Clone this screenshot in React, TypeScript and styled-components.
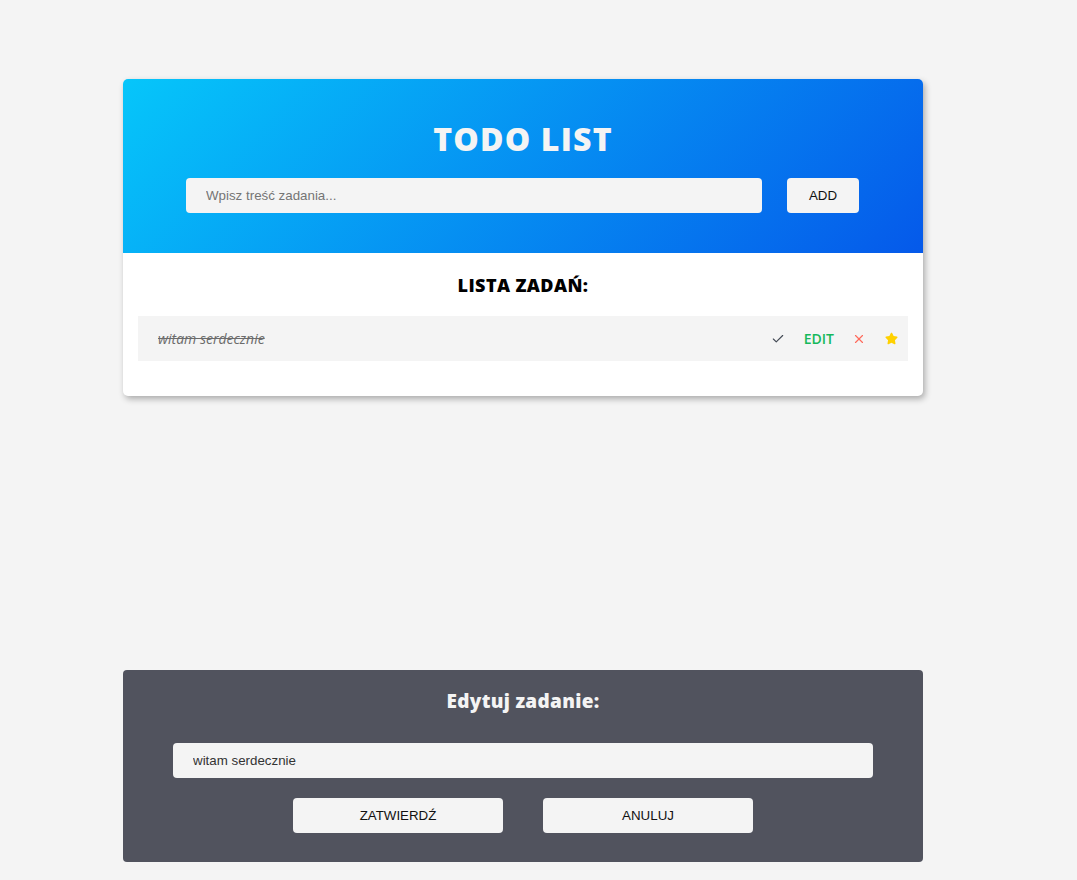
import React from "react";
import styled, { createGlobalStyle } from "styled-components";
import { Check, X } from "lucide-react";
import { FaStar } from "react-icons/fa";

const Global = createGlobalStyle`
  html, body { margin: 0; padding: 0; background: #f4f4f4; }
  body { font-family: "Liberation Sans", Arial, sans-serif; }
  * { box-sizing: border-box; }
`;

const Page = styled.div`
  padding: 79px 0 0 123px;
  display: flex;
  flex-direction: column;
`;

const Card = styled.div`
  width: 800px;
  background: #fff;
  border-radius: 5px;
  box-shadow: 2px 3px 6px rgba(0, 0, 0, 0.3);
  overflow: hidden;
`;

const Header = styled.header`
  height: 174px;
  background: linear-gradient(135deg, #06c6fa 0%, #0559ea 100%);
  display: flex;
  flex-direction: column;
  align-items: center;
  padding-top: 40px;
`;

const Title = styled.h1`
  margin: 0;
  color: #f4f4f4;
  font-family: "Open Sans", sans-serif;
  font-weight: 800;
  font-size: 32px;
  line-height: 40px;
  letter-spacing: 1.2px;
`;

const AddRow = styled.div`
  display: flex;
  gap: 25px;
  margin-top: 19px;
  padding-right: 1px;
`;

const Input = styled.input<{ $w: number }>`
  width: ${(p) => p.$w}px;
  height: 35px;
  border: none;
  border-radius: 4px;
  background: #f4f4f4;
  padding: 0 20px;
  font-family: "Liberation Sans", Arial, sans-serif;
  font-size: 13.33px;
  color: #333;
  outline: none;
  &::placeholder { color: #757575; }
`;

const Button = styled.button<{ $w: number }>`
  width: ${(p) => p.$w}px;
  height: 35px;
  border: none;
  border-radius: 4px;
  background: #f4f4f4;
  font-family: "Liberation Sans", Arial, sans-serif;
  font-size: 13.33px;
  color: #111;
  text-transform: uppercase;
  cursor: pointer;
`;

const ListSection = styled.section`
  padding: 20px 15px 35px;
  display: flex;
  flex-direction: column;
  align-items: center;
`;

const ListTitle = styled.h2`
  margin: 0;
  font-family: "Open Sans", sans-serif;
  font-weight: 800;
  font-size: 18px;
  line-height: 24px;
  letter-spacing: 0.4px;
  color: #000;
`;

const Row = styled.div`
  margin-top: 19px;
  width: 770px;
  height: 45px;
  background: #f4f4f4;
  display: flex;
  align-items: center;
  padding: 0 10px 0 20px;
`;

const TaskText = styled.span`
  flex: 1;
  font-family: "Open Sans", sans-serif;
  font-style: italic;
  font-size: 14px;
  color: #6b6b6b;
  text-decoration: line-through;
`;

const Actions = styled.div`
  display: flex;
  align-items: center;
`;

const IconBtn = styled.span<{ $c: string; $ml: number }>`
  display: inline-flex;
  align-items: center;
  color: ${(p) => p.$c};
  margin-left: ${(p) => p.$ml}px;
  font-family: "Open Sans", sans-serif;
  font-weight: 600;
  font-size: 14px;
`;

const EditPanel = styled.div`
  margin-top: 274px;
  width: 800px;
  height: 192px;
  background: #51535e;
  border-radius: 4px;
  display: flex;
  flex-direction: column;
  align-items: center;
  padding-top: 19px;
`;

const EditTitle = styled.h3`
  margin: 0;
  color: #f4f4f4;
  font-family: "Open Sans", sans-serif;
  font-weight: 800;
  font-size: 19px;
  line-height: 24px;
  letter-spacing: 0.3px;
`;

const EditInputWrap = styled.div`
  margin-top: 30px;
`;

const ButtonRow = styled.div`
  display: flex;
  gap: 40px;
  margin-top: 20px;
`;

export default function App() {
  return (
    <>
      <Global />
      <Page>
        <Card>
          <Header>
            <Title>TODO LIST</Title>
            <AddRow>
              <Input $w={576} placeholder="Wpisz treść zadania..." />
              <Button $w={72}>ADD</Button>
            </AddRow>
          </Header>
          <ListSection>
            <ListTitle>LISTA ZADAŃ:</ListTitle>
            <Row>
              <TaskText>witam serdecznie</TaskText>
              <Actions>
                <IconBtn $c="#444b55" $ml={0}>
                  <Check size={14} strokeWidth={2} />
                </IconBtn>
                <IconBtn $c="#16b85b" $ml={19}>EDIT</IconBtn>
                <IconBtn $c="#ff6a5c" $ml={18}>
                  <X size={14} strokeWidth={2} />
                </IconBtn>
                <IconBtn $c="#ffd100" $ml={19}>
                  <FaStar size={13} />
                </IconBtn>
              </Actions>
            </Row>
          </ListSection>
        </Card>
        <EditPanel>
          <EditTitle>Edytuj zadanie:</EditTitle>
          <EditInputWrap>
            <Input $w={700} defaultValue="witam serdecznie" />
          </EditInputWrap>
          <ButtonRow>
            <Button $w={210}>ZATWIERDŹ</Button>
            <Button $w={210}>ANULUJ</Button>
          </ButtonRow>
        </EditPanel>
      </Page>
    </>
  );
}
